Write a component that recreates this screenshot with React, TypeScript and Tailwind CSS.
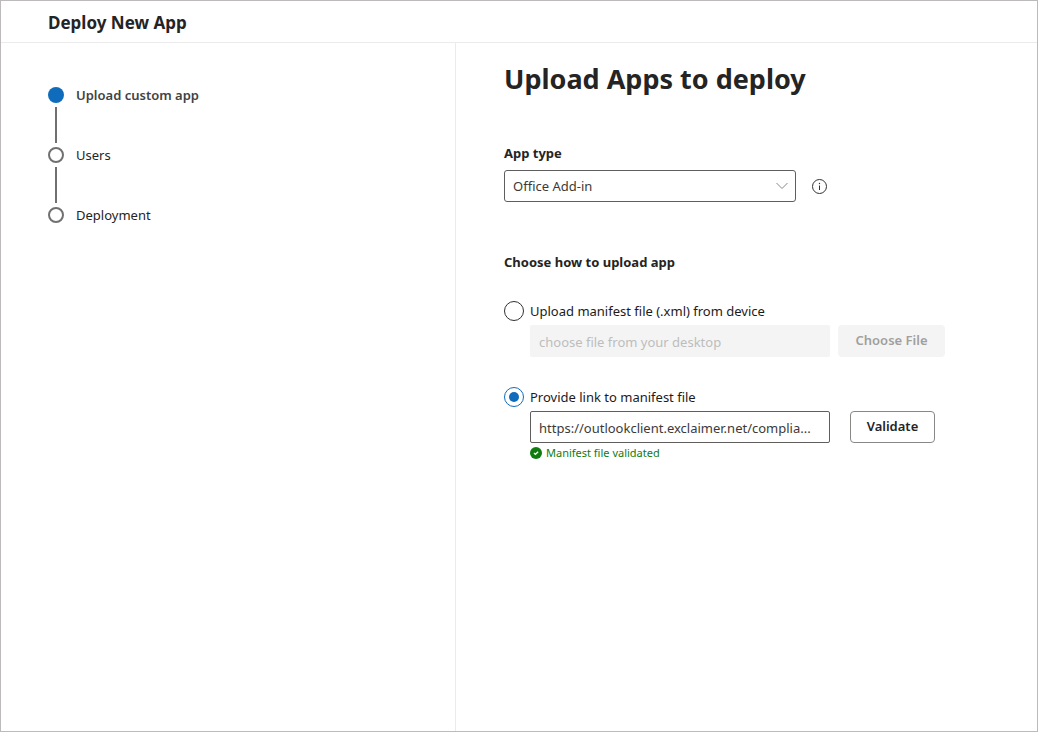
import React, { useState } from "react"

type StepState = "current" | "pending"

interface Step {
  label: string
  state: StepState
}

const steps: Step[] = [
  { label: "Upload custom app", state: "current" },
  { label: "Users", state: "pending" },
  { label: "Deployment", state: "pending" },
]

const StepList: React.FC = () => (
  <ol className="flex flex-col gap-1">
    {steps.map((step, index) => (
      <li key={step.label} className="flex gap-3" aria-current={step.state === "current" ? "step" : undefined}>
        <div className="flex flex-col items-center gap-1">
          {step.state === "current" ? (
            <span className="size-4 rounded-full bg-[#0f6cbd]" />
          ) : (
            <span className="size-4 rounded-full border-2 border-[#707070]" />
          )}
          {index < steps.length - 1 && <span className="h-9 w-0.5 bg-[#707070]" />}
        </div>
        <span
          className={
            step.state === "current"
              ? "text-[13px] leading-4 font-semibold text-[#424242]"
              : "text-[13px] leading-4 text-[#242424]"
          }
        >
          {step.label}
        </span>
      </li>
    ))}
  </ol>
)

interface RadioOptionProps {
  id: string
  label: string
  checked: boolean
  onChange: () => void
}

const RadioOption: React.FC<RadioOptionProps> = ({ id, label, checked, onChange }) => (
  <div className="flex h-5 items-center gap-1.5">
    <input
      type="radio"
      name="upload-method"
      id={id}
      checked={checked}
      onChange={onChange}
      className="size-5 shrink-0 appearance-none rounded-full border border-[#323130] bg-white bg-clip-content p-1 checked:border-[#0f6cbd] checked:bg-[#0f6cbd]"
    />
    <label htmlFor={id} className="text-[13px] leading-5 text-[#1b1b1b]">
      {label}
    </label>
  </div>
)

const InfoIcon = () => (
  <svg viewBox="0 0 16 16" className="size-4" fill="none" stroke="#323130" aria-hidden="true">
    <circle cx="7.5" cy="8.5" r="7" />
    <path d="M7.5 7.5v4.5" />
    <circle cx="7.5" cy="5.5" r="0.7" fill="#323130" stroke="none" />
  </svg>
)

const ValidIcon = () => (
  <svg viewBox="0 0 12 12" className="size-3 shrink-0" aria-hidden="true">
    <circle cx="6" cy="6" r="6" fill="#107c10" />
    <path d="M4 6.1l1.4 1.3 2.7-2.6" fill="none" stroke="#fff" strokeWidth="1.4" />
  </svg>
)

export default function App() {
  const [method, setMethod] = useState<"file" | "link">("link")
  const [manifestUrl, setManifestUrl] = useState("https://outlookclient.exclaimer.net/complia...")

  return (
    <div className="flex min-h-screen flex-col border border-[#bcbabb] bg-white font-['Noto_Sans','Open_Sans',sans-serif] text-[#242424]">
      <header className="border-b border-[#ebebeb] px-[47px] pt-[9px] pb-[7px]">
        <p className="text-[17px] leading-[25px] font-bold">Deploy New App</p>
      </header>

      <div className="grid flex-1 grid-cols-[455fr_581fr]">
        <nav aria-label="Progress" className="border-r border-[#ebebeb] py-11 pr-4 pl-[47px]">
          <StepList />
        </nav>

        <main className="px-12 pt-4 pb-8">
          <h1 className="text-[27px] leading-10 font-bold">Upload Apps to deploy</h1>

          <label htmlFor="app-type" className="mt-11 block text-[13px] leading-5 font-bold">
            App type
          </label>
          <div className="mt-[7px] flex items-center gap-4">
            <div className="grid w-full max-w-[292px] items-center">
              <select
                id="app-type"
                className="col-start-1 row-start-1 h-8 appearance-none rounded-[3px] border border-[#605e5c] bg-white px-2 pt-px text-[13px] text-[#3b3a39]"
              >
                <option>Office Add-in</option>
              </select>
              <svg
                viewBox="0 0 12 8"
                className="pointer-events-none col-start-1 row-start-1 mr-2 h-2 w-3 justify-self-end"
                fill="none"
                stroke="#8a8886"
                aria-hidden="true"
              >
                <path d="M0.5 1l5.5 5.5L11.5 1" />
              </svg>
            </div>
            <button type="button" aria-label="About app types">
              <InfoIcon />
            </button>
          </div>

          <fieldset className="mt-[50px]">
            <legend className="text-[13px] leading-5 font-bold">Choose how to upload app</legend>

            <div className="mt-[29px]">
              <RadioOption
                id="method-file"
                label="Upload manifest file (.xml) from device"
                checked={method === "file"}
                onChange={() => setMethod("file")}
              />
              <div className="mt-1 flex gap-2 pl-[26px]">
                <input
                  type="text"
                  aria-label="Manifest file"
                  placeholder="choose file from your desktop"
                  disabled
                  className="h-8 w-full max-w-[300px] rounded-xs bg-[#f4f4f4] px-[9px] pt-0.5 text-[13px] placeholder:text-[#bdbdbd]"
                />
                <button
                  type="button"
                  disabled
                  className="h-8 w-[107px] shrink-0 rounded bg-[#f4f4f4] text-[13px] font-semibold text-[#a19f9d]"
                >
                  Choose File
                </button>
              </div>
            </div>

            <div className="mt-[30px]">
              <RadioOption
                id="method-link"
                label="Provide link to manifest file"
                checked={method === "link"}
                onChange={() => setMethod("link")}
              />
              <div className="mt-1 flex gap-5 pl-[26px]">
                <input
                  type="text"
                  aria-label="Manifest link"
                  value={manifestUrl}
                  onChange={(e) => setManifestUrl(e.target.value)}
                  className="h-8 w-full max-w-[300px] rounded-xs border border-[#605e5c] px-2 pt-0.5 text-[13px] text-[#3b3a39]"
                />
                <button
                  type="button"
                  className="h-8 w-[85px] shrink-0 rounded border border-[#8a8886] bg-white text-[13px] font-semibold"
                >
                  Validate
                </button>
              </div>
              <p className="mt-0.5 flex items-center gap-1 pl-[26px] text-[11px] leading-4 text-[#107c10]">
                <ValidIcon />
                Manifest file validated
              </p>
            </div>
          </fieldset>
        </main>
      </div>
    </div>
  )
}
